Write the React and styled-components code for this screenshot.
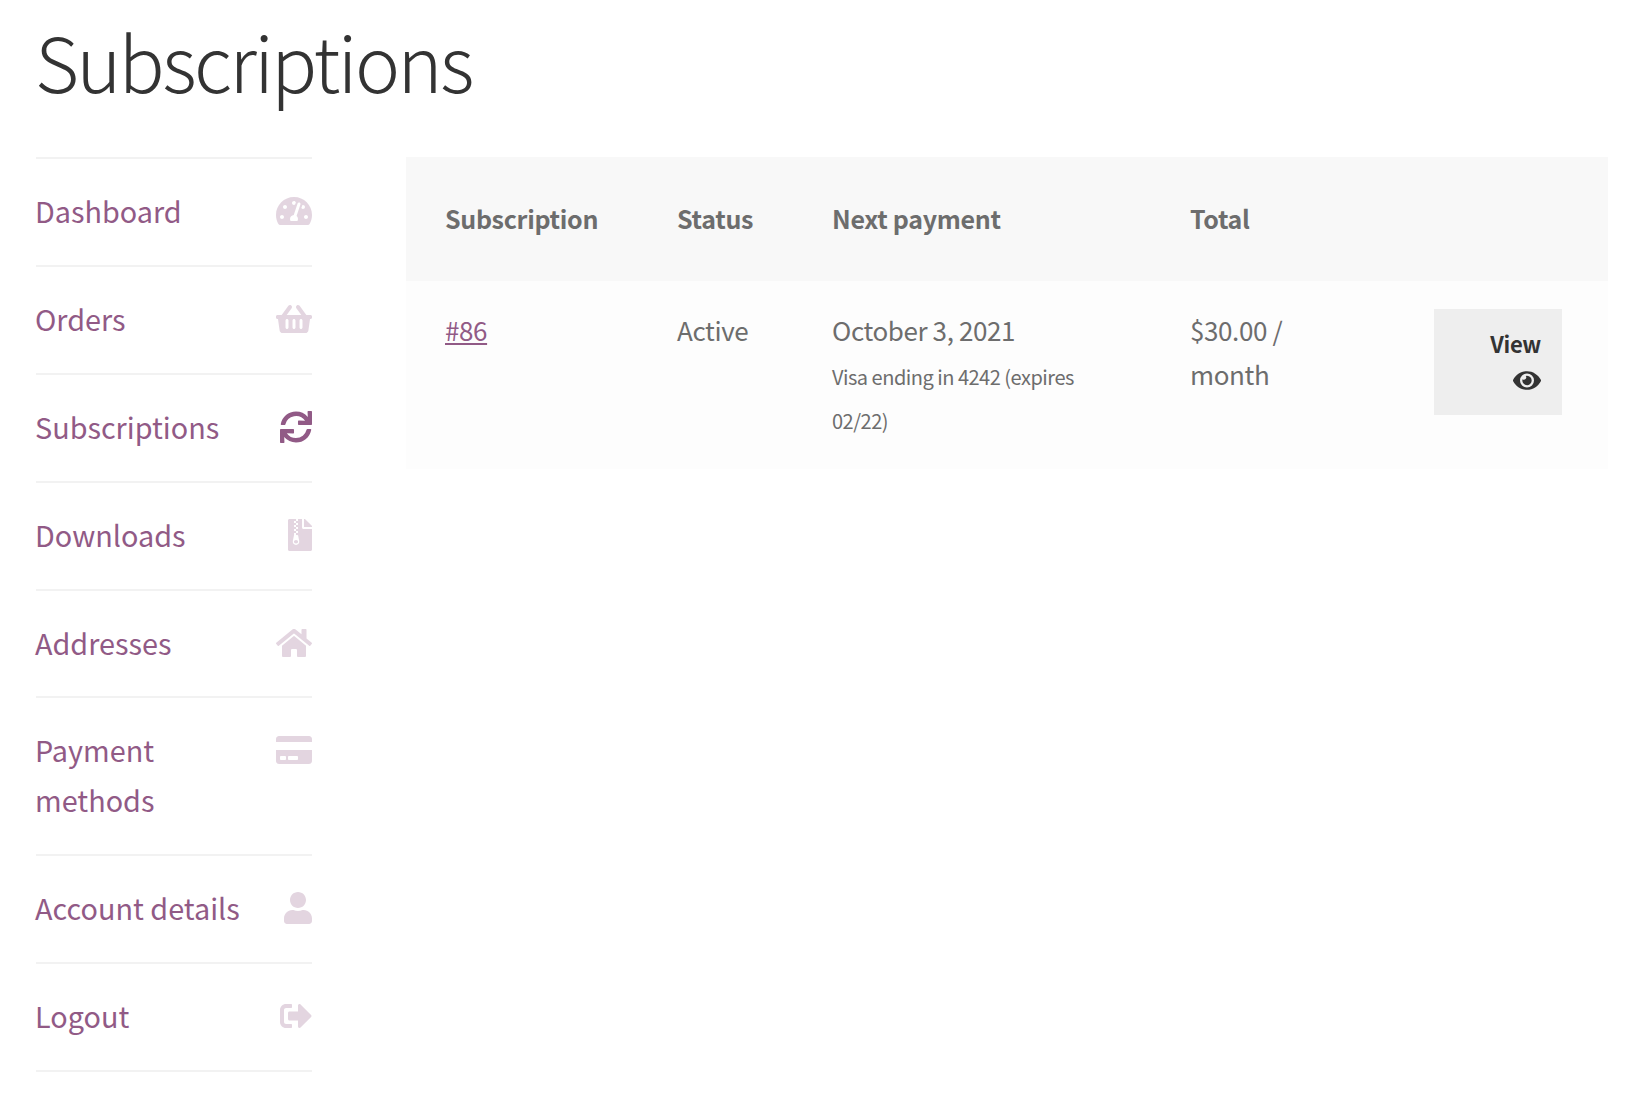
import React from 'react';
import styled, { createGlobalStyle } from 'styled-components';
import { FaTachometerAlt, FaShoppingBasket, FaSync, FaFileArchive, FaHome, FaCreditCard, FaUser, FaSignOutAlt, FaEye } from 'react-icons/fa';

const Global = createGlobalStyle`
  html, body { margin: 0; padding: 0; background: #fff; }
  body { font-family: "Noto Sans CJK JP", "Noto Sans", sans-serif; color: #6d6d6d; font-size: 26px; }
  * { box-sizing: border-box; }
`;
const Page = styled.div`padding: 12px 40px 0 36px; width: 1648px; height: 1104px; overflow: hidden;`;
const Title = styled.h1`
  margin: 0 0 48px -1px; font-size: 76px; font-weight: 300; line-height: 97px; color: #333; letter-spacing: -2.5px;
`;
const Columns = styled.div`display: flex; align-items: flex-start; gap: 94px;`;
const Nav = styled.nav`width: 276px; flex: none; border-top: 2px solid #f2f2f2;`;
const NavItem = styled.a`
  display: flex; justify-content: space-between; align-items: flex-start; padding: 27px 0 28.9px;
  border-bottom: 2px solid #f2f2f2; color: #915a86; font-size: 28.8px; line-height: 50px;
`;
const NavLabel = styled.span`width: 225px; margin-left: -1px;`;
const IconSlot = styled.span`
  display: flex; justify-content: flex-end; height: ${p => p.$clip}px; margin-top: 9px; overflow: hidden;
  color: #915a86; opacity: ${p => (p.$active ? 1 : 0.25)};
  svg { height: 32px; width: ${p => p.$w}px; flex: none; }
`;
const Table = styled.table`
  width: 1202px; border-collapse: collapse; table-layout: fixed; font-size: 26px; line-height: 44px; letter-spacing: -0.4px;
`;
const Head = styled.th`
  background: #f8f8f8; height: 124px; padding: 0 0 2px 39px; text-align: left; font-size: 25px; letter-spacing: -0.3px; font-weight: 600; width: ${p => p.$w}px;
`;
const Cell = styled.td`background: #fdfdfd; padding: 27px 39px 26px 39px; vertical-align: top;`;
const RowLink = styled.a`color: #915a86; text-decoration: underline;`;
const Small = styled.div`margin-top: 3px; font-size: 20px; line-height: 44px; letter-spacing: -0.5px;`;
const View = styled.a`
  display: block; width: 128px; height: 106px; margin-top: 1px; background: #eee; color: #333; padding: 16px 21px 0 0;
  text-align: right; font-size: 22px; line-height: 36px; font-weight: 600; letter-spacing: -0.3px;
`;
const EyeLine = styled.div`
  display: flex; justify-content: flex-end; height: 38px; align-items: center;
  svg { height: 25px; width: 28px; }
`;

const items = [
  ['Dashboard', FaTachometerAlt, 36, 30],
  ['Orders', FaShoppingBasket, 36, 32],
  ['Subscriptions', FaSync, 32, 32, true],
  ['Downloads', FaFileArchive, 24, 32],
  ['Addresses', FaHome, 36, 32],
  ['Payment methods', FaCreditCard, 36, 32],
  ['Account details', FaUser, 28, 32],
  ['Logout', FaSignOutAlt, 32, 32],
];

export default function App() {
  return (
    <Page>
      <Global />
      <Title>Subscriptions</Title>
      <Columns>
        <Nav>
          {items.map(([label, Icon, w, clip, active]) => (
            <NavItem key={label}>
              <NavLabel>{label}</NavLabel>
              <IconSlot $w={w} $clip={clip} $active={active}><Icon /></IconSlot>
            </NavItem>
          ))}
        </Nav>
        <Table>
          <thead>
            <tr>
              <Head $w={232}>Subscription</Head>
              <Head $w={155}>Status</Head>
              <Head $w={358}>Next payment</Head>
              <Head $w={244}>Total</Head>
              <Head />
            </tr>
          </thead>
          <tbody>
            <tr>
              <Cell><RowLink>#86</RowLink></Cell>
              <Cell>Active</Cell>
              <Cell>October 3, 2021<Small>Visa ending in 4242 (expires 02/22)</Small></Cell>
              <Cell>$30.00 / month</Cell>
              <Cell><View>View<EyeLine><FaEye /></EyeLine></View></Cell>
            </tr>
          </tbody>
        </Table>
      </Columns>
    </Page>
  );
}
